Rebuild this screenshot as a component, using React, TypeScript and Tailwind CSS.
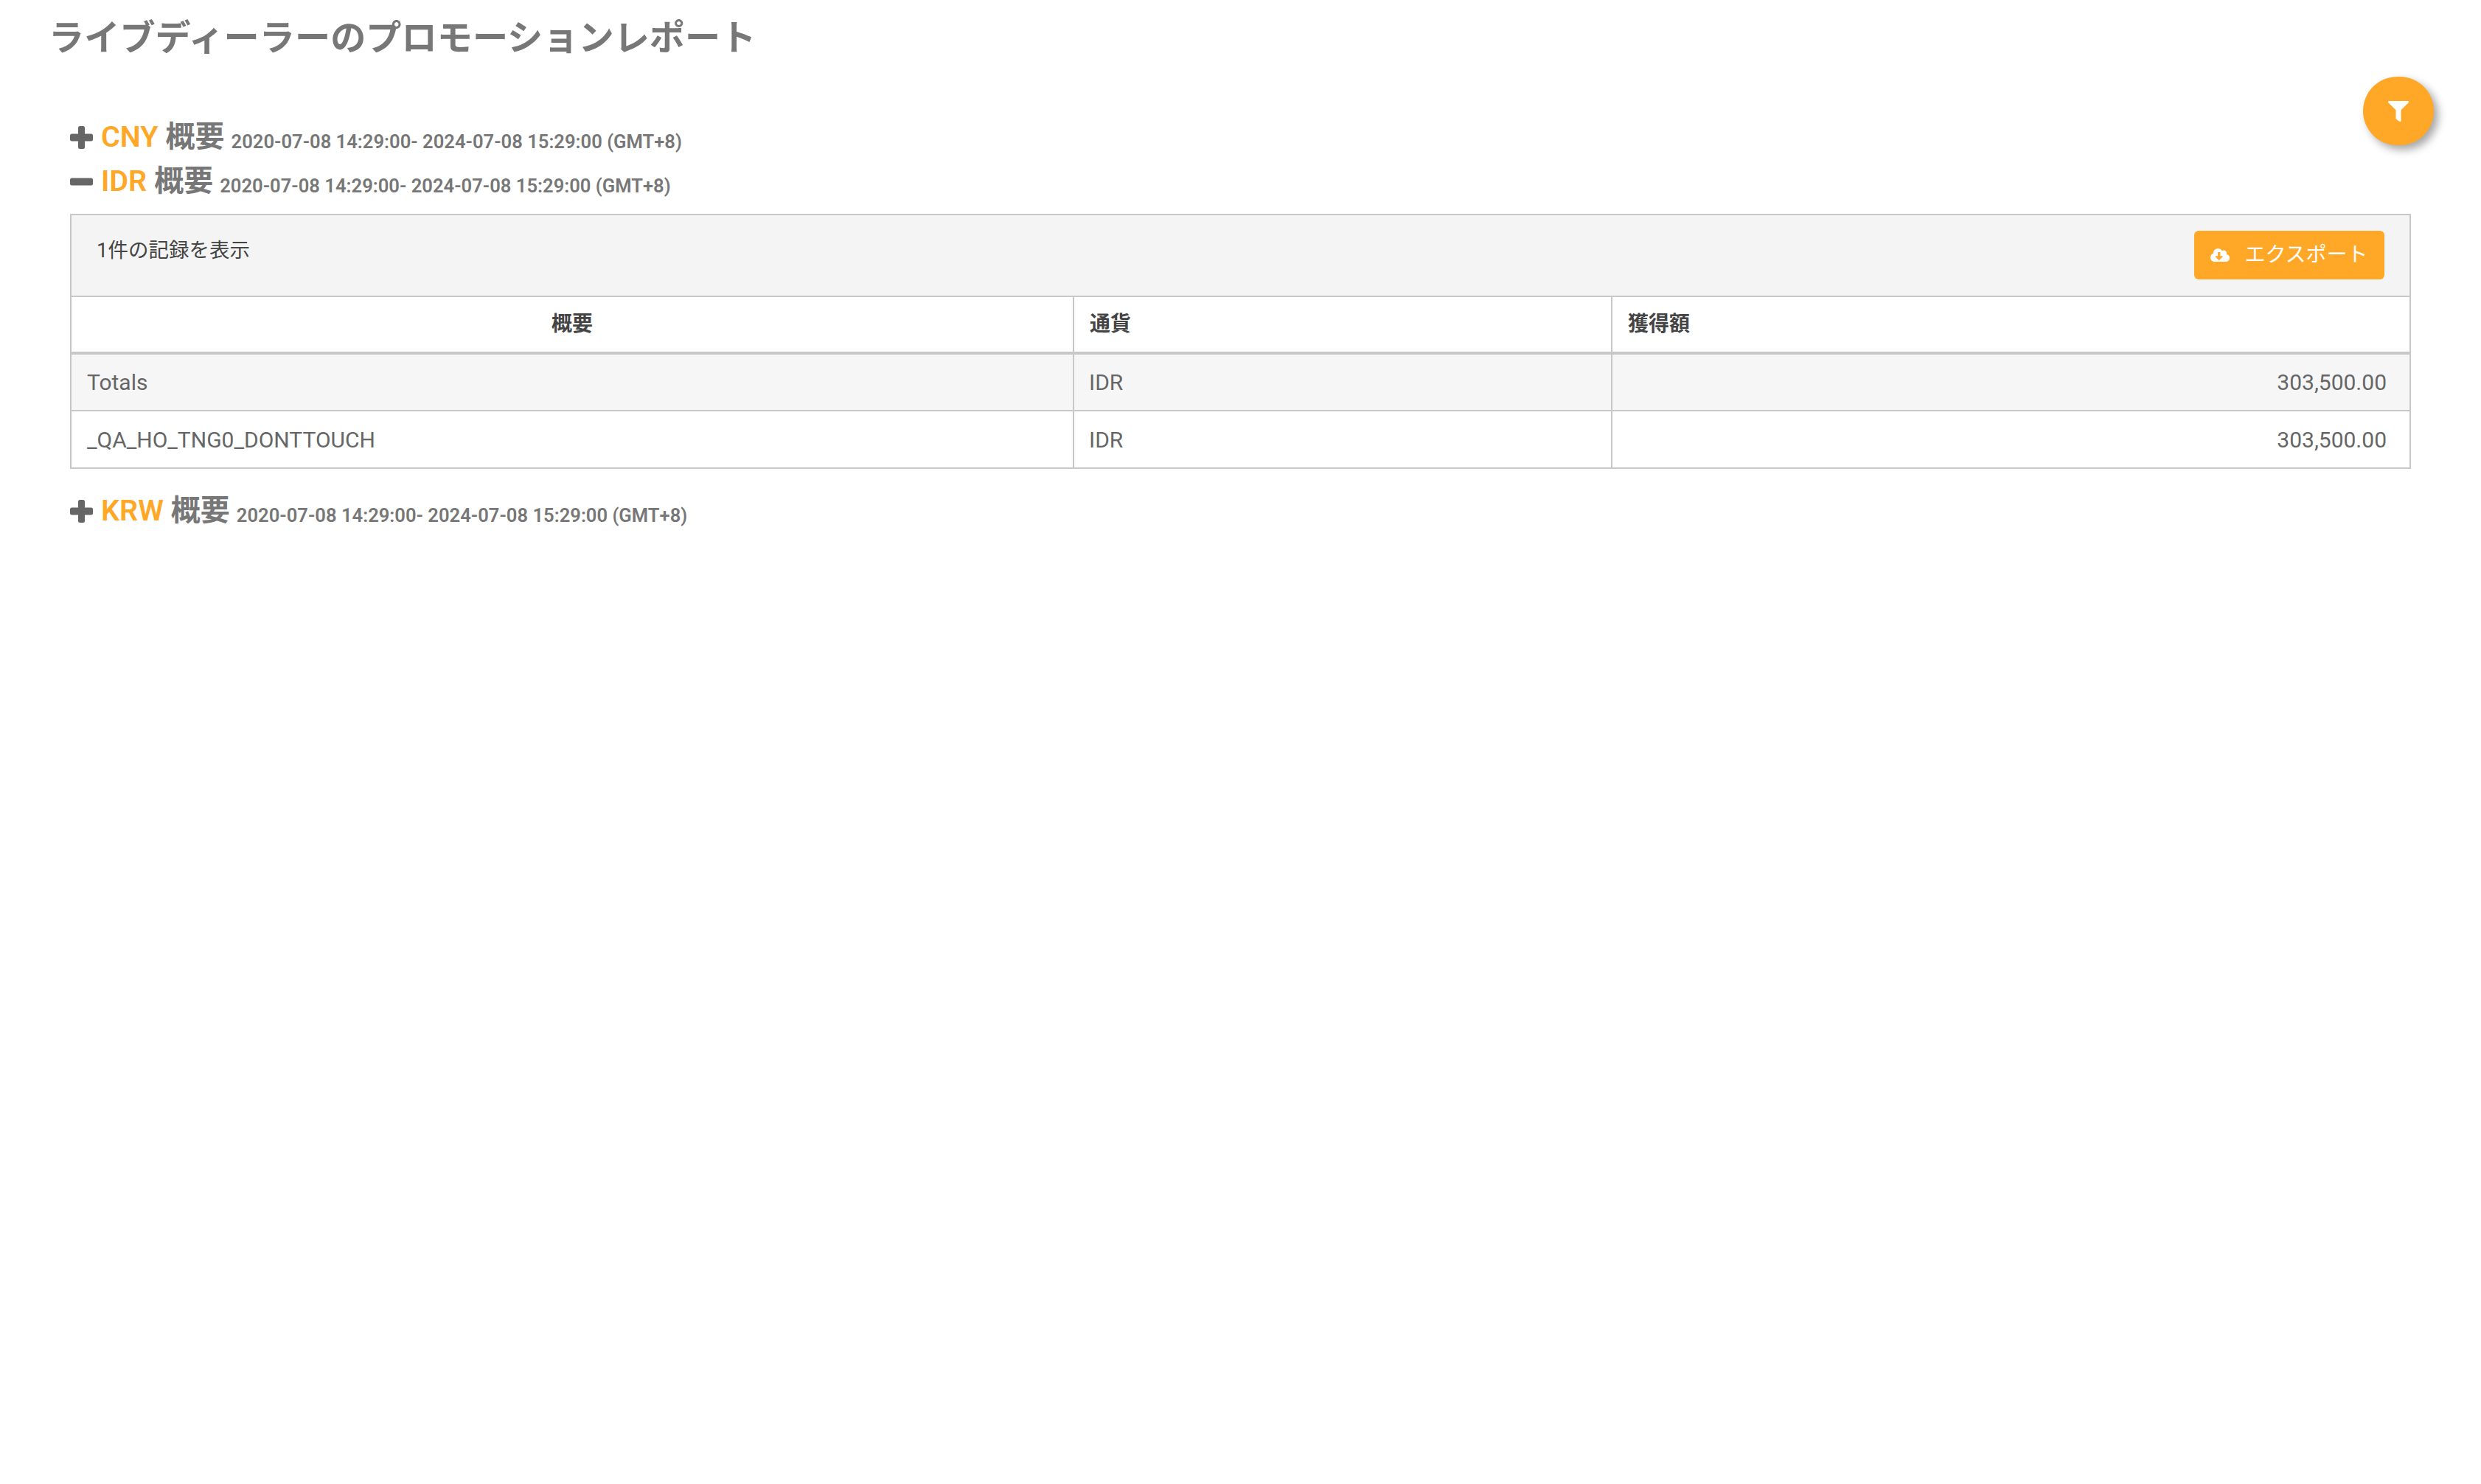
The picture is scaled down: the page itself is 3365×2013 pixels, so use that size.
import { FaCloudDownloadAlt, FaFilter } from "react-icons/fa"

const RANGE = "2020-07-08 14:29:00- 2024-07-08 15:29:00 (GMT+8)"

function SectionTitle({ code, open = false }: { code: string; open?: boolean }) {
  return (
    <div className="flex h-[60px] items-center">
      <svg viewBox="0 0 31 31" className="mr-[11px] h-[31px] w-[31px] shrink-0 fill-[#666666]">
        <rect x="0" y="10.5" width="31" height="10" rx="2.5" />
        {!open && <rect x="11" y="0" width="9" height="31" rx="2.5" />}
      </svg>
      <div className="flex items-baseline whitespace-nowrap pt-[4px]">
        <span className="text-[39.5px] leading-[60px] font-semibold text-[#ffa726]">{code}</span>
        <span className="ml-[10px] text-[40px] leading-[60px] font-bold text-[#777777]">概要</span>
        <span className="relative top-[2px] ml-[9px] text-[25.6px] leading-[60px] font-semibold text-[#777777]">{RANGE}</span>
      </div>
    </div>
  )
}

function Row({ name, striped = false }: { name: string; striped?: boolean }) {
  return (
    <tr className={striped ? "bg-[#f6f6f6]" : "bg-white"}>
      <td className="h-[78px] border-2 border-[#c8c8c8] px-[21px] text-[30px] text-[#666666]">{name}</td>
      <td className="h-[78px] border-2 border-[#c8c8c8] px-[20px] text-[30px] text-[#666666]">IDR</td>
      <td className="h-[78px] border-2 border-[#c8c8c8] pr-[31px] pl-[21px] text-right text-[30px] text-[#666666]">303,500.00</td>
    </tr>
  )
}

export default function App() {
  return (
    <div
      className="relative min-h-[2013px] bg-white"
      style={{ fontFamily: 'Roboto, "Noto Sans CJK JP", sans-serif' }}
    >
      <h1 className="pt-[26px] pl-[66px] text-[48.2px] leading-[52px] font-bold text-[#777777]">
        ライブディーラーのプロモーションレポート
      </h1>

      <button className="absolute top-[104px] left-[3205px] flex h-[93px] w-[96px] items-center justify-center rounded-full bg-[#ffa726] shadow-[6px_6px_12px_rgba(0,0,0,0.35)]">
        <FaFilter className="h-[28px] w-[28px] text-white" />
      </button>

      <div className="px-[95px] pt-[78px]">
        <SectionTitle code="CNY" />
        <SectionTitle code="IDR" open />

        <div className="mt-[14px] border-2 border-b-0 border-[#c8c8c8] bg-[#f4f4f4]">
          <div className="flex h-[109px] items-start justify-between pt-[21px] pr-[34px] pl-[34px]">
            <span className="pt-[7px] text-[27.5px] leading-[40px] text-[#444444]">1件の記録を表示</span>
            <button className="flex h-[66px] w-[258px] items-center justify-center rounded-[6px] bg-[#ffa726] text-[28px] text-white">
              <FaCloudDownloadAlt className="mr-[20px] h-[26px] w-[26px]" />
              エクスポート
            </button>
          </div>
        </div>

        <table className="w-full table-fixed border-collapse">
          <colgroup>
            <col className="w-[1360px]" />
            <col className="w-[730px]" />
            <col />
          </colgroup>
          <thead>
            <tr className="bg-white">
              <th className="h-[77px] border-2 border-b-4 border-[#c8c8c8] px-[21px] text-center text-[28px] font-bold text-[#444444]">概要</th>
              <th className="h-[77px] border-2 border-b-4 border-[#c8c8c8] px-[21px] text-left text-[28px] font-bold text-[#444444]">通貨</th>
              <th className="h-[77px] border-2 border-b-4 border-[#c8c8c8] px-[21px] text-left text-[28px] font-bold text-[#444444]">獲得額</th>
            </tr>
          </thead>
          <tbody>
            <Row name="Totals" striped />
            <Row name="_QA_HO_TNG0_DONTTOUCH" />
          </tbody>
        </table>

        <div className="mt-[27px]">
          <SectionTitle code="KRW" />
        </div>
      </div>
    </div>
  )
}
